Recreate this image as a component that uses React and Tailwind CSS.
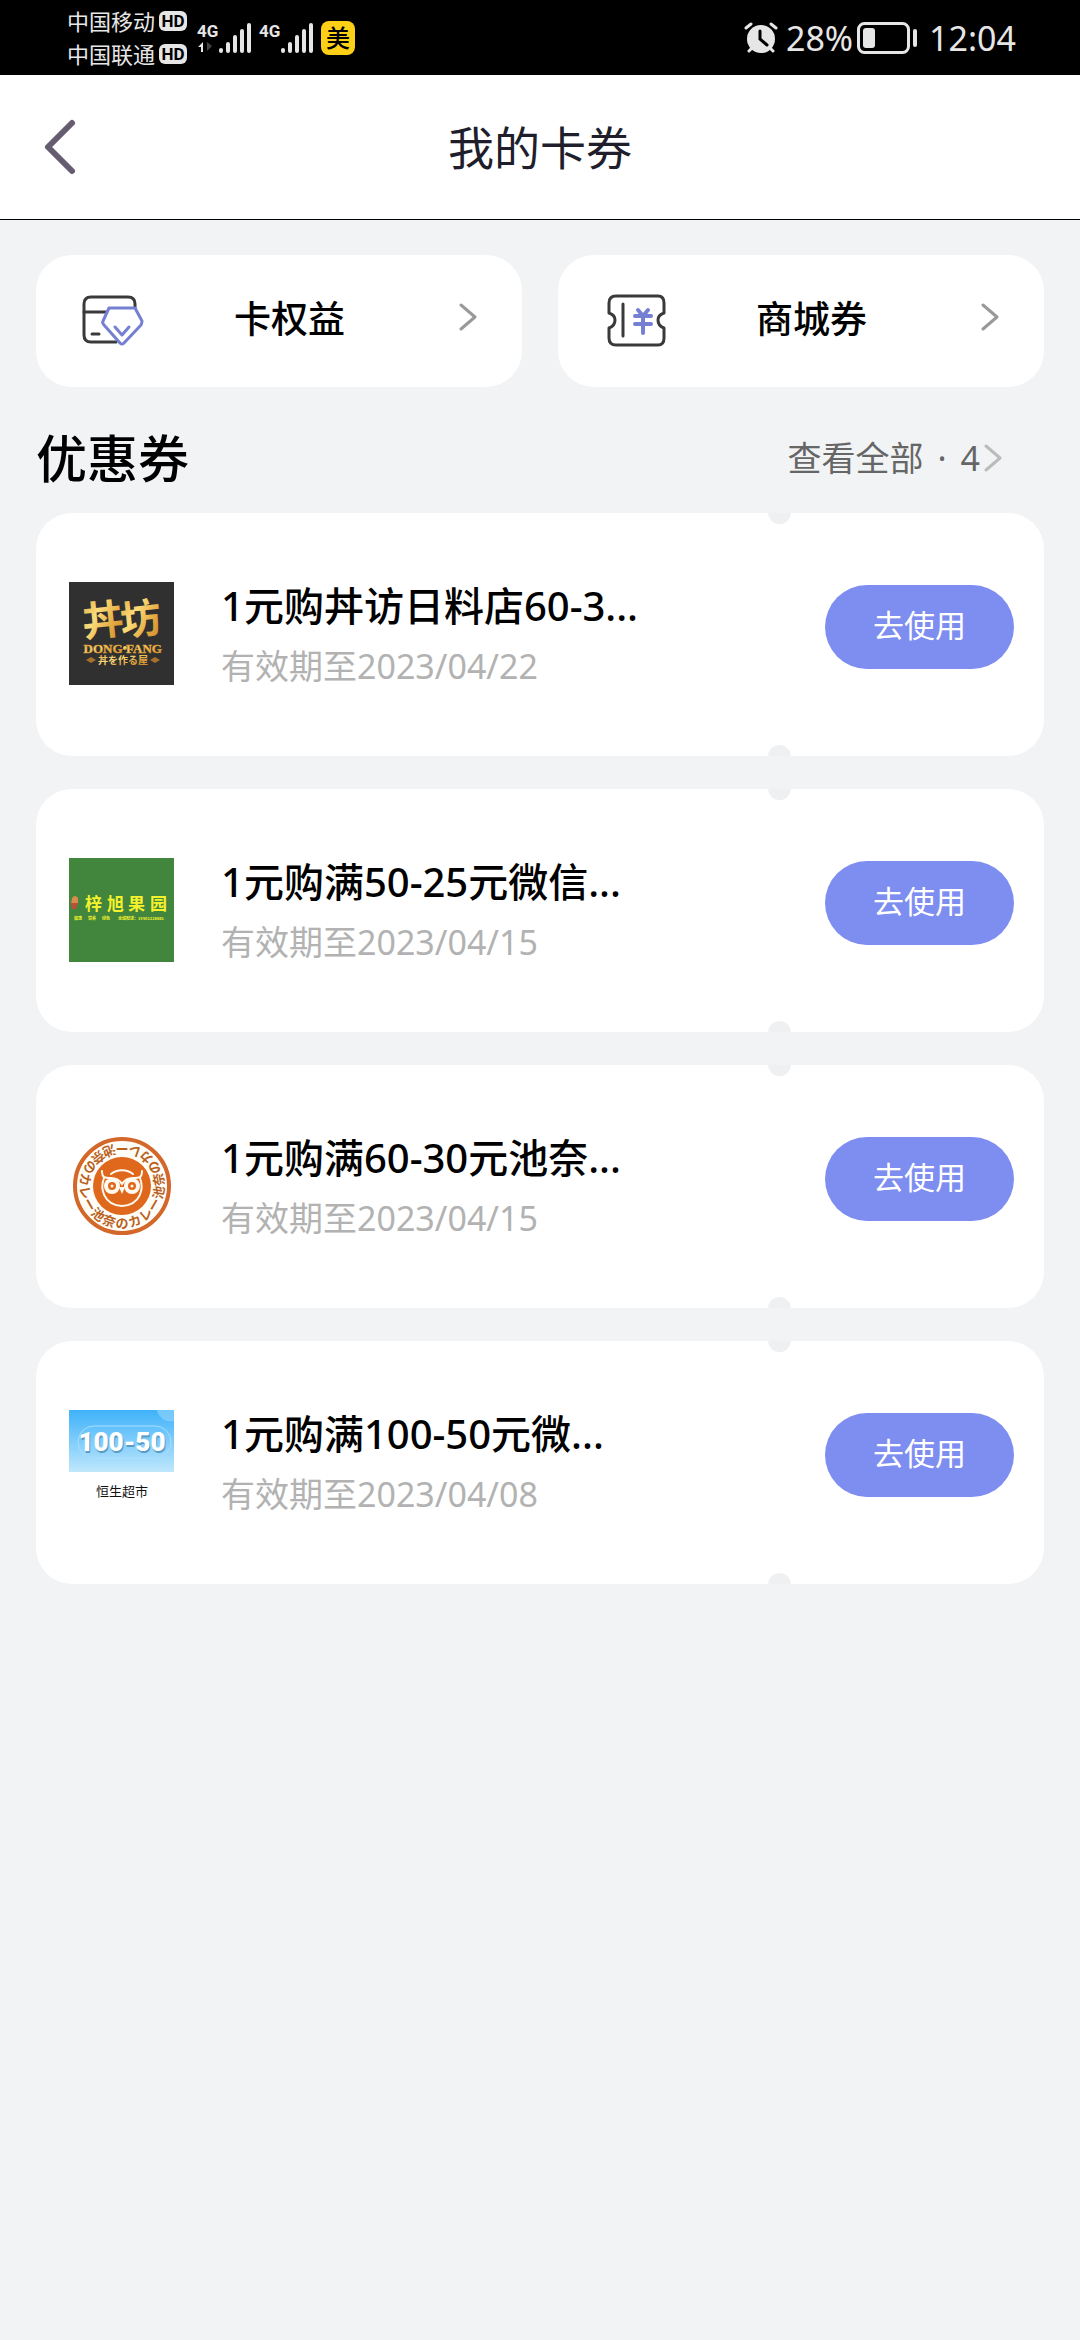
import React from "react";

const coupons = [
    { id: 1, title: "1元购丼访日料店60-3...", date: "2023/04/22", logo: DongFangLogo },
    { id: 2, title: "1元购满50-25元微信...", date: "2023/04/15", logo: OrchardLogo },
    { id: 3, title: "1元购满60-30元池奈...", date: "2023/04/15", logo: OwlLogo },
    { id: 4, title: "1元购满100-50元微...", date: "2023/04/08", logo: MarketLogo },
];

function DongFangLogo() {
    return (
        <svg className="w-[105px] h-[103px]" viewBox="0 0 105 103" role="img" aria-label="丼坊">
            <defs>
                <linearGradient id="gold" x1="0" y1="0" x2="1" y2="1">
                    <stop offset="0" stopColor="#d99a35"/>
                    <stop offset="0.4" stopColor="#fbdc79"/>
                    <stop offset="0.7" stopColor="#e3a63d"/>
                    <stop offset="1" stopColor="#c5812a"/>
                </linearGradient>
            </defs>
            <rect width="105" height="103" fill="#303030"/>
            <g fill="url(#gold)" textAnchor="middle">
                <text x="34" y="53" fontSize="41" fontWeight="700" transform="rotate(-6 34 40)"
                      className="font-['Noto_Sans_CJK_SC',sans-serif]">丼</text>
                <text x="72" y="52" fontSize="41" fontWeight="700" transform="rotate(-6 72 40)"
                      className="font-['Noto_Sans_CJK_SC',sans-serif]">坊</text>
                <text x="34" y="71" fontSize="13" fontWeight="700" stroke="#d99a35" strokeWidth="0.5"
                      className="font-['Liberation_Serif',serif]">DONG</text>
                <text x="75" y="71" fontSize="13" fontWeight="700" stroke="#d99a35" strokeWidth="0.5"
                      className="font-['Liberation_Serif',serif]">FANG</text>
                <circle cx="56" cy="66" r="2"/>
                <text x="54" y="82" fontSize="10" fontWeight="700"
                      className="font-['Noto_Sans_CJK_JP',sans-serif]">丼を作る屋</text>
            </g>
            <g fill="#a8702a">
                <path d="M17 78 L22 75 L27 78 L22 81 Z"/>
                <path d="M81 78 L86 75 L91 78 L86 81 Z"/>
            </g>
        </svg>
    );
}

function OrchardLogo() {
    return (
        <svg className="w-[105px] h-[104px]" viewBox="0 0 105 104" role="img" aria-label="梓旭果园">
            <rect width="105" height="104" fill="#42853c"/>
            <path d="M3 40 q3 -4 6 0 l0 5 -3 3 -4 -2 z" fill="#d98a4c"/>
            <path d="M2 45 h7 l-2 6 h-4 z" fill="#b8503a"/>
            <g fill="#f4f22c" fontWeight="700" className="font-['Noto_Sans_CJK_SC',sans-serif]">
                <text y="52" fontSize="17" x="16 38 59 81">梓旭果园</text>
                <text x="5" y="62" fontSize="4">健康</text>
                <text x="19" y="62" fontSize="4">营养</text>
                <text x="33" y="62" fontSize="4">绿色</text>
                <text x="49" y="62" fontSize="4">全城配送：15501228681</text>
            </g>
        </svg>
    );
}

function OwlLogo() {
    const ring = "のカレー池奈のカレー池奈のカレー池奈".split("");
    return (
        <svg className="w-[105px] h-[104px]" viewBox="0 0 105 104" role="img" aria-label="池奈のカレー">
            <circle cx="53" cy="52" r="47" fill="#fffdf8" stroke="#d4672a" strokeWidth="4"/>
            <g fill="#b9621f" fontSize="13" fontWeight="700" textAnchor="middle"
               className="font-['Noto_Sans_CJK_JP',sans-serif]">
                {ring.map(( char , i ) => (
                    <text key={i} x="53" y="94" transform={`rotate(${-20 * i} 53 52)`}>{char}</text>
                ))}
            </g>
            <circle cx="53" cy="52" r="29" fill="#e0681c"/>
            <g fill="none" stroke="#fffaf0" strokeWidth="2" strokeLinecap="round">
                <path d="M33 37 C33 44 36 44 42 44 C48 44 51 47 53 50 C55 47 58 44 64 44 C70 44 73 44 73 37"/>
                <path d="M35 44 C31 54 34 71 53 72 C72 71 75 54 71 44"/>
                <path d="M42 40 C48 35 58 35 64 40"/>
            </g>
            <circle cx="43" cy="52" r="8" fill="#fffaf0"/>
            <circle cx="63" cy="52" r="8" fill="#fffaf0"/>
            <circle cx="43" cy="52" r="4" fill="#e0681c"/>
            <circle cx="63" cy="52" r="4" fill="#e0681c"/>
            <circle cx="43" cy="52" r="1.5" fill="#fffaf0"/>
            <circle cx="63" cy="52" r="1.5" fill="#fffaf0"/>
            <path d="M50 53 h6 l-3 7 z" fill="#fffaf0"/>
        </svg>
    );
}

function MarketLogo() {
    return (
        <svg className="w-[105px] h-[104px]" viewBox="0 0 105 104" role="img" aria-label="恒生超市">
            <defs>
                <linearGradient id="sky" x1="0" y1="0" x2="0" y2="1">
                    <stop offset="0" stopColor="#3fb2fa"/>
                    <stop offset="1" stopColor="#bfe7fc"/>
                </linearGradient>
            </defs>
            <rect width="105" height="62" fill="url(#sky)"/>
            <path d="M88 0 a14 14 0 0 0 17 11 V0 z" fill="#8bd2fb" opacity="0.7"/>
            <rect x="9" y="16" width="93" height="32" rx="16" fill="none" stroke="#a9defc" strokeWidth="1"/>
            <g fontSize="26" fontWeight="900" textAnchor="middle" className="font-[Roboto,sans-serif]">
                <text x="54" y="43" fill="#5a9cc4">100-50</text>
                <text x="53" y="41" fill="#ffffff">100-50</text>
            </g>
            <text x="53" y="86" fontSize="13" textAnchor="middle" fill="#111111"
                  className="font-['Noto_Sans_CJK_SC',sans-serif]">恒生超市</text>
        </svg>
    );
}

function CardIcon() {
    return (
        <svg className="w-[62px] h-[54px]" viewBox="0 0 62 54" fill="none" strokeWidth="3"
             strokeLinecap="round" strokeLinejoin="round" aria-hidden="true">
            <path d="M53 14 V10 Q53 3 46 3 H9 Q2 3 2 10 V41 Q2 48 9 48 H34" stroke="#3a3a3c"/>
            <path d="M2 18 H24 M10 40 H17" stroke="#3a3a3c"/>
            <path d="M27 14 H53 L60 27 Q60 29 59 31 L42 49 Q40 51 38 49 L22 31 Q20 29 21 27 Z"
                  fill="#ffffff" stroke="#7680d2"/>
            <path d="M33 33 L40 41 L47 33" stroke="#7680d2"/>
        </svg>
    );
}

function TicketIcon() {
    return (
        <svg className="w-[62px] h-[54px]" viewBox="0 0 62 54" fill="none" strokeWidth="3"
             strokeLinecap="round" strokeLinejoin="round" aria-hidden="true">
            <path d="M12 2 H54 Q60 2 60 9 V19 Q54 21 54 26 Q54 32 60 34 V44 Q60 51 54 51 H12 Q5 51 5 44 V34 Q11 32 11 26 Q11 21 5 19 V9 Q5 2 12 2 Z"
                  stroke="#3a3a3c"/>
            <path d="M19 10 V42" stroke="#3a3a3c"/>
            <path d="M34 16 L39 22 L44 16 M31 22 H47 M31 30 H47 M39 22 V39" stroke="#7680d2" strokeWidth="4"/>
        </svg>
    );
}

function Arrow({ className }) {
    return (
        <svg className={className} viewBox="0 0 18 30" fill="none" stroke="currentColor" strokeWidth="3"
             strokeLinecap="round" strokeLinejoin="round" aria-hidden="true">
            <path d="M2 3 L16 15 L2 27"/>
        </svg>
    );
}

function Signal() {
    return (
        <svg className="w-8 h-8" viewBox="0 0 32 32" stroke="#e6e6e6" strokeWidth="4" strokeLinecap="round"
             aria-hidden="true">
            <path d="M2 28 V29 M9 22 V29 M16 15 V29 M23 9 V29 M30 3 V29"/>
        </svg>
    );
}

function Carrier({ name }) {
    return (
        <div className="flex items-center gap-1 text-[22px] leading-[33px]">
            <span>{name}</span>
            <span className="flex h-5 w-7 items-center justify-center rounded-md bg-[#e6e6e6] font-[Roboto,sans-serif] text-[17px] leading-5 font-bold text-black">HD</span>
        </div>
    );
}

function StatusBar() {
    return (
        <div className="flex h-[75px] items-center justify-between bg-black pl-[67px] pr-16 text-[#e6e6e6]">
            <div className="flex items-center">
                <div>
                    <Carrier name="中国移动"/>
                    <Carrier name="中国联通"/>
                </div>
                <div className="ml-2.5 flex h-8 font-[Roboto,sans-serif] text-[17px] leading-[18px] font-bold">
                    <div className="w-[22px]">
                        <div>4G</div>
                        <svg className="h-4 w-5" viewBox="0 0 20 16" aria-hidden="true">
                            <path d="M1 7 L6 2 V12 H4 V7 Z" fill="#e6e6e6"/>
                            <path d="M10 2 V11 L15 6 Z" fill="#444444"/>
                        </svg>
                    </div>
                    <Signal/>
                </div>
                <div className="ml-2 flex h-8 font-[Roboto,sans-serif] text-[17px] leading-[18px] font-bold">
                    <div className="w-[22px]">4G</div>
                    <Signal/>
                </div>
                <span className="ml-2 flex size-[34px] items-center justify-center rounded-lg bg-[#fdd017] text-2xl font-medium text-black">美</span>
            </div>
            <div className="flex items-center text-[34px] leading-10">
                <svg className="w-[34px] h-8" viewBox="0 0 34 32" aria-hidden="true">
                    <circle cx="17" cy="17" r="14" fill="#e6e6e6"/>
                    <path d="M2 6 L7 2 M32 6 L27 2 M5 29 L8 26 M29 29 L26 26" stroke="#e6e6e6" strokeWidth="3"
                          strokeLinecap="round"/>
                    <path d="M16 9 V17 L23 23" stroke="#000000" strokeWidth="3" fill="none" strokeLinecap="round"/>
                </svg>
                <span className="ml-2">28%</span>
                <svg className="ml-1 w-[60px] h-8" viewBox="0 0 60 32" aria-hidden="true">
                    <rect x="1.500" y="1.500" width="50" height="29" rx="6" fill="none" stroke="#e6e6e6" strokeWidth="3"/>
                    <rect x="6" y="6" width="12" height="20" rx="3" fill="#e6e6e6"/>
                    <rect x="56" y="7" width="4" height="18" rx="2" fill="#e6e6e6"/>
                </svg>
                <span className="ml-3">12:04</span>
            </div>
        </div>
    );
}

function Tile({ icon , label }) {
    return (
        <button type="button" className="flex h-[132px] flex-1 items-center rounded-[36px] bg-white pl-[46px] pr-[45px]">
            {icon}
            <span className="flex-1 pr-6 pb-1 text-center text-[37px] leading-[54px] font-medium">{label}</span>
            <Arrow className="mb-2 h-[30px] w-[18px] text-[#999999]"/>
        </button>
    );
}

function Coupon({ coupon }) {
    const Logo = coupon.logo;
    return (
        <li className="relative flex h-[243px] items-start overflow-hidden rounded-[36px] bg-white pl-[33px] pr-[30px]">
            <div className="pt-[69px]">
                <Logo/>
            </div>
            <div className="ml-[47px] min-w-0 flex-1 pt-[63px]">
                <h3 className="truncate text-[40px] leading-[60px] font-medium">{coupon.title}</h3>
                <p className="text-[34px] leading-[60px] text-[#b2b2b2]">有效期至{coupon.date}</p>
            </div>
            <button type="button" className="mt-[72px] h-[84px] w-[189px] rounded-full bg-[#7d8df0] pb-1 text-[31px] leading-[80px] text-white">
                去使用
            </button>
            <span className="absolute -top-3 right-[253px] size-[23px] rounded-full bg-[#eff0f2]"/>
            <span className="absolute -bottom-3 right-[253px] size-[23px] rounded-full bg-[#eff0f2]"/>
        </li>
    );
}

const App = () => {
    return (
        <div className="min-h-screen bg-[#f2f3f5] font-['Noto_Sans','Noto_Sans_CJK_SC',sans-serif] text-black">
            <StatusBar/>
            <header className="grid h-[145px] grid-cols-3 items-center border-b border-black bg-white px-[42px]">
                <button type="button" aria-label="返回" className="justify-self-start">
                    <svg className="w-9 h-[58px]" viewBox="0 0 36 58" fill="none" stroke="#655c70" strokeWidth="6"
                         strokeLinecap="round" strokeLinejoin="round">
                        <path d="M30 5 L6 29 L30 53"/>
                    </svg>
                </button>
                <h1 className="text-center text-[46px] leading-[60px] text-[#211e2c]">我的卡券</h1>
            </header>
            <main className="px-9 pt-[35px]">
                <div className="flex gap-9">
                    <Tile icon={<CardIcon/>} label="卡权益"/>
                    <Tile icon={<TicketIcon/>} label="商城券"/>
                </div>
                <div className="flex h-[126px] items-center justify-between pt-4">
                    <h2 className="text-[51px] leading-[60px] font-medium">优惠券</h2>
                    <a href="#all" className="flex items-center pr-[42px] text-[34px] leading-[50px] text-[#666666]">
                        <span>查看全部</span>
                        <span className="mx-3.5">·</span>
                        <span>4</span>
                        <Arrow className="ml-1 h-[30px] w-[18px] text-[#bbbbbb]"/>
                    </a>
                </div>
                <ul className="flex flex-col gap-[33px]">
                    {coupons.map(( coupon ) => (
                        <Coupon key={coupon.id} coupon={coupon}/>
                    ))}
                </ul>
            </main>
        </div>
    );
}

export default App;
